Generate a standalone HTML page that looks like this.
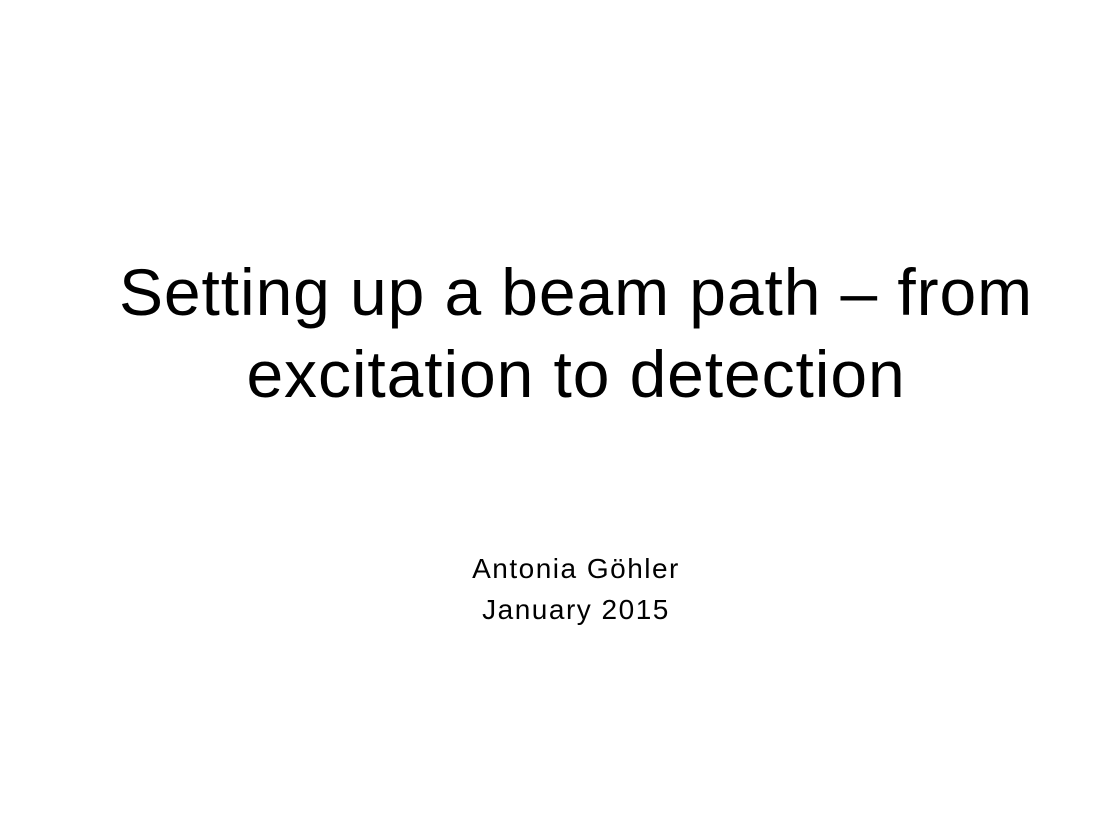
<!DOCTYPE html>
<html><head><meta charset="utf-8"><style>
html,body{margin:0;padding:0;background:#fff;width:1118px;height:824px;overflow:hidden}
.t{position:absolute;left:0;width:1152px;text-align:center;font-family:"Liberation Sans",sans-serif;color:#000;white-space:nowrap}
#title{top:251px;font-size:66px;line-height:82px;font-weight:normal;letter-spacing:0.9px}
#sub{top:548px;font-size:28px;line-height:41px;letter-spacing:1.5px}
</style></head><body>
<div class="t" id="title">Setting up a beam path – from<br>excitation to detection</div>
<div class="t" id="sub">Antonia Göhler<br>January 2015</div>
</body></html>
